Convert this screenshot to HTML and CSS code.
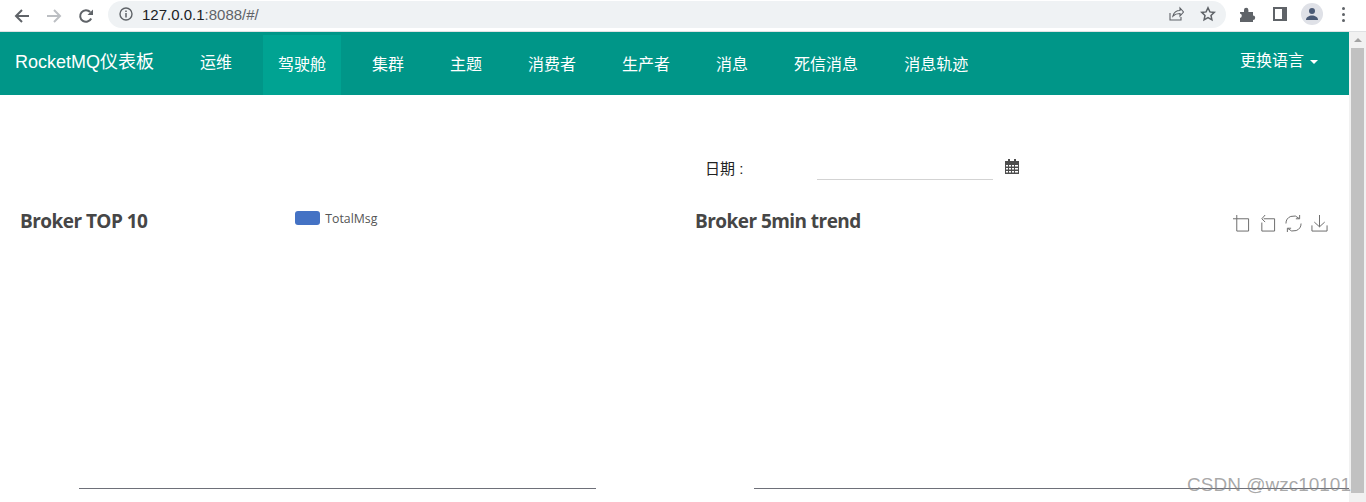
FILE: index.html
```html
<!DOCTYPE html>
<html lang="zh">
<head>
  <meta charset="UTF-8" />
  <title>RocketMQ</title>
  <link rel="stylesheet" href="styles.css">
</head>
<body>

  <!-- Barra del navegador -->
  <div class="browser-bar">
    <div class="browser-btns">
      <svg class="browser-icon" viewBox="0 0 16 16"><path d="M15 8H2M8 2 2 8l6 6" fill="none" stroke="#5f6368" stroke-width="2"/></svg>
      <svg class="browser-icon" viewBox="0 0 16 16"><path d="M1 8h13M8 2l6 6-6 6" fill="none" stroke="#bcbfc3" stroke-width="2"/></svg>
      <svg class="browser-icon" viewBox="0 0 16 16"><path d="M13.2 10.5A5.8 5.8 0 1 1 12.2 4" fill="none" stroke="#5f6368" stroke-width="2"/><path d="M9.5 7H15V1.5z" fill="#5f6368"/></svg>
    </div>
    <div class="address">
      <svg class="info-icon" viewBox="0 0 14 14"><circle cx="7" cy="7" r="6" fill="none" stroke="#5f6368" stroke-width="1.4"/><path d="M7 6v4.4M7 3.4v1.5" stroke="#5f6368" stroke-width="1.5"/></svg>
      <span class="url">127.0.0.1<span class="url-rest">:8088/#/</span></span>
      <div class="address-end">
        <svg class="small-icon" viewBox="0 0 16 16"><path d="M2 7v7h11v-3M5 10c1-4 4-5.500 7-5.500V2l3.500 4-3.500 4V7.500C9 7.500 7 8 5 10z" fill="none" stroke="#5f6368" stroke-width="1.100"/></svg>
        <svg class="small-icon" viewBox="0 0 16 16"><path d="m8 1.800 1.900 4.100 4.400.5-3.300 3 .9 4.400L8 11.600l-3.900 2.200.9-4.400-3.300-3 4.400-.5z" fill="none" stroke="#5f6368" stroke-width="1.500"/></svg>
      </div>
    </div>
    <div class="browser-tools">
      <svg class="small-icon" viewBox="0 0 16 16"><path d="M0 6h4V4a2.200 2.200 0 0 1 4.400 0v2H13v3.500a2.200 2.200 0 0 1 0 4.400V16H0v-4a2.300 2.300 0 0 0 0-4.500z" fill="#5f6368"/></svg>
      <svg class="small-icon" viewBox="0 0 16 16"><path fill-rule="evenodd" d="M1 1h14v14H1zM3 3v10h7V3z" fill="#5f6368"/></svg>
      <div class="avatar">
        <svg viewBox="0 0 16 16" width="16" height="16"><circle cx="8" cy="5" r="3" fill="#4a5a75"/><path d="M2 14c0-3 3-4.500 6-4.500s6 1.500 6 4.500z" fill="#4a5a75"/></svg>
      </div>
      <div class="kebab"><i></i><i></i><i></i></div>
    </div>
  </div>

  <div class="viewport">
    <div class="page">

      <!-- Menú principal -->
      <nav class="navbar">
        <a class="brand" href="#">RocketMQ仪表板</a>
        <ul class="nav-list">
          <li class="nav-item nav-item-up"><a href="#">运维</a></li>
          <li class="nav-item active"><a href="#">驾驶舱</a></li>
          <li class="nav-item"><a href="#">集群</a></li>
          <li class="nav-item"><a href="#">主题</a></li>
          <li class="nav-item"><a href="#">消费者</a></li>
          <li class="nav-item"><a href="#">生产者</a></li>
          <li class="nav-item"><a href="#">消息</a></li>
          <li class="nav-item"><a href="#">死信消息</a></li>
          <li class="nav-item"><a href="#">消息轨迹</a></li>
        </ul>
        <a class="lang" href="#">更换语言<span class="caret"></span></a>
      </nav>

      <!-- Selector de fecha -->
      <div class="date-row">
        <label class="date-label">日期 :</label>
        <div class="date-input"></div>
        <svg class="calendar" viewBox="0 0 14 15">
          <path d="M0 2h14v13H0z" fill="#4d4d4d"/>
          <path d="M3 0h2v3H3zM9 0h2v3H9z" fill="#4d4d4d"/>
          <path d="M1 6h2v1.500H1zM4 6h2v1.500H4zM7 6h2v1.500H7zM10 6h3v1.500h-3zM1 9h2v1.500H1zM4 9h2v1.500H4zM7 9h2v1.500H7zM10 9h3v1.500h-3zM1 12h2v1.500H1zM4 12h2v1.500H4zM7 12h2v1.500H7zM10 12h3v1.500h-3z" fill="#fff"/>
        </svg>
      </div>

      <!-- Gráficas -->
      <div class="charts">
        <section class="chart">
          <div class="chart-head">
            <h3 class="chart-title">Broker TOP 10</h3>
            <div class="legend"><span class="legend-box"></span>TotalMsg</div>
          </div>
          <div class="axis axis-left"></div>
        </section>
        <section class="chart">
          <div class="chart-head">
            <h3 class="chart-title">Broker 5min trend</h3>
            <div class="toolbox">
              <svg class="tool" viewBox="0 0 18 18"><path d="M4 0v4H0M4 4h12.500v13H4z" fill="none" stroke="#666"/></svg>
              <svg class="tool" viewBox="0 0 18 18"><path d="M5 4h11.500v13H3V8M6.500 0 3 4l3.500 3.500" fill="none" stroke="#666"/></svg>
              <svg class="tool tool-wide" viewBox="0 0 18 18"><path d="M1 9a8 8 0 0 1 14-5.300M17 9a8 8 0 0 1-14 5.300M15.500 0v4h-4M2.500 18v-4h4" fill="none" stroke="#666"/></svg>
              <svg class="tool tool-wide" viewBox="0 0 18 18"><path d="M9 0v12.500M3.500 7.500 9 12.500l5.500-5M1 11v6h16v-6" fill="none" stroke="#666"/></svg>
            </div>
          </div>
          <div class="axis axis-right"></div>
        </section>
      </div>
    </div>

    <!-- Barra de desplazamiento -->
    <div class="scrollbar">
      <span class="scroll-up"></span>
      <div class="scroll-thumb"></div>
    </div>
  </div>

  <div class="watermark">CSDN @wzc10101</div>

</body>
</html>
```

FILE: styles.css
```css
html, body {
  height: 100%;
}

body {
  margin: 0;
  font-family: "Liberation Sans", "Noto Sans CJK SC", sans-serif;
  background-color: #fff;
  color: #333;
  overflow: hidden;
  display: flex;
  flex-direction: column;
}

a {
  color: inherit;
  text-decoration: none;
}

/* Barra del navegador */
.browser-bar {
  height: 31px;
  flex-shrink: 0;
  display: flex;
  align-items: center;
  background-color: #fff;
  border-bottom: 1px solid #dfe1e3;
}

.browser-btns {
  display: flex;
  gap: 16px;
  width: 108px;
  padding-left: 14px;
  box-sizing: border-box;
}

.browser-icon {
  width: 16px;
  height: 16px;
}

.address {
  width: 1118px;
  height: 27px;
  margin-top: -3px;
  border-radius: 14px;
  background-color: #eff2f4;
  display: flex;
  align-items: center;
  padding-left: 11px;
  box-sizing: border-box;
}

.info-icon {
  width: 14px;
  height: 14px;
  margin-right: 9px;
}

.url {
  font-size: 15px;
  color: #202124;
}

.url-rest {
  color: #5f6368;
}

.address-end {
  margin-left: auto;
  display: flex;
  gap: 16px;
  padding-right: 10px;
}

.small-icon {
  width: 16px;
  height: 16px;
}

.browser-tools {
  display: flex;
  align-items: center;
  gap: 16px;
  margin-left: 14px;
  margin-top: -3px;
}

.avatar {
  width: 22px;
  height: 22px;
  margin-left: -3px;
  border-radius: 50%;
  background-color: #dfe1e7;
  display: flex;
  align-items: center;
  justify-content: center;
}

.kebab {
  display: flex;
  flex-direction: column;
  gap: 3px;
  margin-left: 3px;
}

.kebab i {
  width: 3px;
  height: 3px;
  border-radius: 50%;
  background-color: #5f6368;
}

/* Contenido con scroll */
.viewport {
  flex: 1;
  display: flex;
  min-height: 0;
}

.page {
  flex: 1;
  min-width: 0;
}

.scrollbar {
  width: 17px;
  background-color: #f1f1f1;
  display: flex;
  flex-direction: column;
  align-items: center;
}

.scroll-up {
  margin-top: 6px;
  border-left: 4px solid transparent;
  border-right: 4px solid transparent;
  border-bottom: 4px solid #a3a3a3;
}

.scroll-thumb {
  width: 13px;
  height: 445px;
  margin-top: 6px;
  background-color: #c1c1c1;
}

/* Menú principal */
.navbar {
  height: 63px;
  display: flex;
  background-color: #009688;
  color: #fff;
  font-size: 16px;
}

.brand {
  width: 185px;
  padding-left: 15px;
  box-sizing: border-box;
  font-size: 18px;
  line-height: 60px;
}

.nav-list {
  list-style: none;
  margin: 0;
  padding: 0;
  display: flex;
  gap: 16px;
}

.nav-item {
  margin-top: 3px;
  height: 60px;
  padding: 0 15px;
  line-height: 60px;
  letter-spacing: 0;
}

.nav-item-up {
  line-height: 56px;
}

.nav-item.active {
  background-color: #00a392;
}

.lang {
  margin-left: auto;
  margin-right: 31px;
  line-height: 58px;
}

.caret {
  display: inline-block;
  margin-left: 6px;
  vertical-align: middle;
  border-top: 4px solid #fff;
  border-left: 4px solid transparent;
  border-right: 4px solid transparent;
}

/* Selector de fecha */
.date-row {
  display: flex;
  align-items: flex-end;
  height: 22px;
  margin-top: 63px;
  margin-left: 705px;
  color: #222;
  font-size: 15px;
}

.date-label {
  width: 112px;
  line-height: 20px;
  margin-bottom: 1px;
}

.date-input {
  width: 176px;
  height: 21px;
  border-bottom: 1px solid #d3d3d3;
}

.calendar {
  width: 14px;
  height: 15px;
  margin-left: 12px;
  margin-bottom: 6px;
}

/* Gráficas */
.charts {
  display: grid;
  grid-template-columns: 675px 1fr;
}

.chart-head {
  display: flex;
  align-items: center;
  height: 30px;
  margin-top: 26px;
  padding-left: 20px;
}

.chart-title {
  margin: 0;
  font-family: "Open Sans", sans-serif;
  font-size: 19px;
  font-weight: 700;
  color: #464646;
  letter-spacing: -0.55px;
}

.legend {
  display: flex;
  align-items: center;
  margin-left: 148px;
  margin-bottom: 6px;
  font-family: "Open Sans", sans-serif;
  font-size: 12.3px;
  color: #555;
}

.legend-box {
  width: 25px;
  height: 14px;
  margin-right: 5px;
  border-radius: 3px;
  background-color: #4472c4;
}

.toolbox {
  display: flex;
  margin-left: auto;
  margin-right: 21px;
  gap: 9px;
  margin-top: 4px;
}

.tool {
  width: 17px;
  height: 17px;
}

.axis {
  height: 1px;
  margin-top: 252px;
  background-color: #6e7079;
}

.axis-left {
  margin-left: 79px;
  width: 517px;
}

.axis-right {
  margin-left: 79px;
}

/* Marca de agua */
.watermark {
  position: absolute;
  right: 15px;
  top: 473px;
  font-size: 19px;
  color: rgba(130, 130, 130, 0.7);
  line-height: 24px;
}
```
